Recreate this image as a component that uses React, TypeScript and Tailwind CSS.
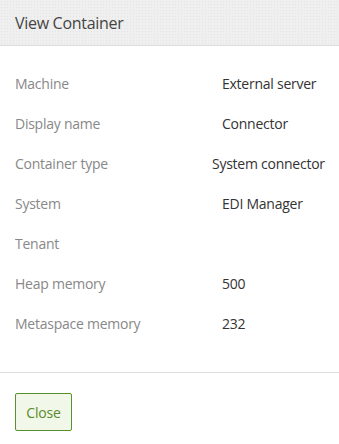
const ROWS: { label: string; value: string; shift?: boolean }[] = [
  { label: 'Machine', value: 'External server' },
  { label: 'Display name', value: 'Connector' },
  { label: 'Container type', value: 'System connector', shift: true },
  { label: 'System', value: 'EDI Manager' },
  { label: 'Tenant', value: '' },
  { label: 'Heap memory', value: '500' },
  { label: 'Metaspace memory', value: '232' },
];

export default function App() {
  return (
    <div className="w-[339px] h-[444px] bg-white font-['Open_Sans',sans-serif] overflow-hidden">
      {/* header */}
      <div
        className="h-[46px] border-b border-[#dcdcdc] bg-[#efefef] flex items-center px-[15px]"
        style={{ backgroundImage: 'radial-gradient(#e4e4e4 0.6px, transparent 0.8px)', backgroundSize: '3px 3px' }}
      >
        <h2 className="text-[16px] text-[#444] tracking-[-0.3px]">View Container</h2>
      </div>

      {/* details */}
      <div className="pt-[17px] pb-[29px]">
        {ROWS.map((row) => (
          <div key={row.label} className="flex items-center h-[40px] text-[14px] tracking-[-0.25px]">
            <div className="w-[222px] pl-[15px] text-[#888]">{row.label}</div>
            <div className={`text-[#333] ${row.shift ? 'ml-[-10px]' : ''}`}>{row.value}</div>
          </div>
        ))}
      </div>

      <div className="border-t border-[#dddddd]" />

      {/* footer */}
      <div className="px-[15px] pt-[20px]">
        <button className="h-[38px] w-[57px] border border-[#5a8f2b] rounded-[2px] bg-[#f1f8e9] text-[#5a8a2a] text-[14px] tracking-[-0.2px]">
          Close
        </button>
      </div>
    </div>
  );
}
